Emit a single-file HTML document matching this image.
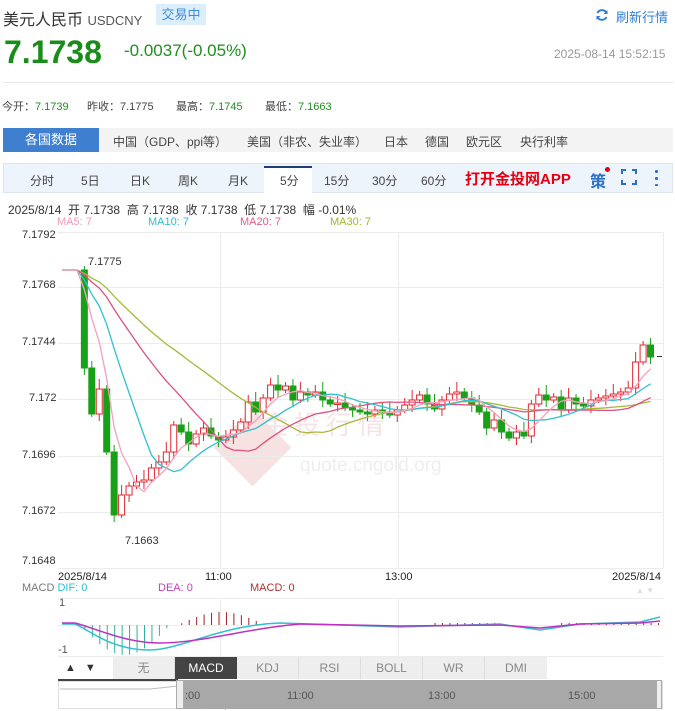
<!DOCTYPE html>
<html><head><meta charset="utf-8"><style>
*{margin:0;padding:0;box-sizing:border-box}
body{width:675px;height:711px;background:#fff;font-family:"Liberation Sans","Noto Sans CJK SC",sans-serif;color:#333;position:relative;overflow:hidden}
.a{position:absolute;white-space:nowrap}
.g{color:#1e8f1e}
</style></head><body>
<div class="a" style="left:3px;top:6px;font-size:16px;color:#333">美元人民币 <span style="font-size:13px;color:#555">USDCNY</span></div>
<div class="a" style="left:156px;top:4px;width:50px;height:21px;background:#ddeefb;color:#3d8fd6;font-size:13px;line-height:21px;text-align:center">交易中</div>
<svg class="a" style="left:595px;top:8px" width="14" height="14" viewBox="0 0 14 14"><path d="M11.5 5A5 5 0 0 0 2.5 5M2.5 9A5 5 0 0 0 11.5 9" stroke="#2d7fd3" stroke-width="2" fill="none"/><path d="M12.5 2v4h-4zM1.5 12V8h4z" fill="#2d7fd3"/></svg>
<div class="a" style="left:616px;top:7px;font-size:13px;color:#2d7fd3">刷新行情</div>
<div class="a g" style="left:4px;top:34px;font-size:32px;font-weight:bold;color:#1a8c1a">7.1738</div>
<div class="a g" style="left:124px;top:41px;font-size:17px">-0.0037(-0.05%)</div>
<div class="a" style="left:554px;top:47px;font-size:12px;color:#999">2025-08-14 15:52:15</div>
<div class="a" style="left:3px;top:82px;width:670px;height:1px;background:#e6e6e6"></div>
<div class="a" style="left:2px;top:98px;font-size:11px;color:#444">今开：<span class="g">7.1739</span></div>
<div class="a" style="left:87px;top:98px;font-size:11px;color:#444">昨收：7.1775</div>
<div class="a" style="left:176px;top:98px;font-size:11px;color:#444">最高：<span class="g">7.1745</span></div>
<div class="a" style="left:265px;top:98px;font-size:11px;color:#444">最低：<span class="g">7.1663</span></div>
<div class="a" style="left:3px;top:128px;width:670px;height:24px;background:#f3f3f3"></div>
<div class="a" style="left:3px;top:128px;width:96px;height:24px;background:#3f7fcf;color:#fff;font-size:13px;line-height:24px;text-align:center">各国数据</div>
<div class="a" style="left:113px;top:133px;font-size:12px;color:#444">中国（GDP、ppi等）</div>
<div class="a" style="left:247px;top:133px;font-size:12px;color:#444">美国（非农、失业率）</div>
<div class="a" style="left:384px;top:133px;font-size:12px;color:#444">日本</div>
<div class="a" style="left:425px;top:133px;font-size:12px;color:#444">德国</div>
<div class="a" style="left:466px;top:133px;font-size:12px;color:#444">欧元区</div>
<div class="a" style="left:520px;top:133px;font-size:12px;color:#444">央行利率</div>
<div class="a" style="left:3px;top:163px;width:670px;height:30px;background:#eef4fb;border:1px solid #dde6f0"></div>
<div class="a" style="left:264px;top:166px;width:48px;height:28px;background:#fff;border-top:2px solid #1f3f7a"></div>
<div class="a" style="top:172px;left:0;font-size:12px;color:#444;width:675px">
<span class="a" style="left:30px">分时</span><span class="a" style="left:81px">5日</span><span class="a" style="left:130px">日K</span><span class="a" style="left:178px">周K</span><span class="a" style="left:228px">月K</span><span class="a" style="left:280px">5分</span><span class="a" style="left:324px">15分</span><span class="a" style="left:372px">30分</span><span class="a" style="left:421px">60分</span></div>
<div class="a" style="left:465px;top:168px;font-size:15px;font-weight:bold;color:#e60012">打开金投网APP</div>
<div class="a" style="left:590px;top:168px;font-size:16px;color:#2d6fc7;font-weight:bold">策</div>
<div class="a" style="left:605px;top:167px;width:5px;height:5px;border-radius:50%;background:#e60012"></div>
<svg class="a" style="left:621px;top:169px" width="16" height="16"><path d="M1 5V1h4M11 1h4v4M15 11v4h-4M5 15H1v-4" stroke="#2d6fc7" stroke-width="2" fill="none"/></svg>
<div class="a" style="left:655px;top:168px;width:3px;height:18px;background:radial-gradient(circle,#2d6fc7 1.5px,transparent 1.6px) 0 0/3px 7px"></div>
<div class="a" style="left:8px;top:201px;font-size:12px;color:#333">2025/8/14 &nbsp;开 7.1738 &nbsp;高 7.1738 &nbsp;收 7.1738 &nbsp;低 7.1738 &nbsp;幅 -0.01%</div>
<div class="a" style="left:57px;top:216px;font-size:11px;color:#f29bb8">MA5: 7</div>
<div class="a" style="left:148px;top:216px;font-size:11px;color:#2bbfd2">MA10: 7</div>
<div class="a" style="left:240px;top:216px;font-size:11px;color:#e85a8a">MA20: 7</div>
<div class="a" style="left:330px;top:216px;font-size:11px;color:#a3b52a">MA30: 7</div>
<div class="a" style="left:262px;top:405px;font-size:26px;color:#f6e4e4;letter-spacing:6px">金投行情</div>
<div class="a" style="left:300px;top:455px;font-size:19px;color:#eee">quote.cngold.org</div>
<div class="a" style="left:225px;top:420px;width:55px;height:55px;background:#f7e2e2;transform:rotate(45deg)"></div>
<svg class="a" style="left:0;top:0" width="675" height="711" id="s"></svg>
<div class="a" style="left:22px;top:230px;font-size:11px;color:#333;line-height:1">7.1792</div>
<div class="a" style="left:22px;top:280px;font-size:11px;color:#333;line-height:1">7.1768</div>
<div class="a" style="left:22px;top:337px;font-size:11px;color:#333;line-height:1">7.1744</div>
<div class="a" style="left:29px;top:393px;font-size:11px;color:#333;line-height:1">7.172</div>
<div class="a" style="left:22px;top:450px;font-size:11px;color:#333;line-height:1">7.1696</div>
<div class="a" style="left:22px;top:506px;font-size:11px;color:#333;line-height:1">7.1672</div>
<div class="a" style="left:22px;top:556px;font-size:11px;color:#333;line-height:1">7.1648</div>
<div class="a" style="left:88px;top:256px;font-size:11px;color:#333">7.1775</div>
<div class="a" style="left:125px;top:535px;font-size:11px;color:#333">7.1663</div>
<div class="a" style="left:58px;top:571px;font-size:11px;color:#222">2025/8/14</div>
<div class="a" style="left:205px;top:571px;font-size:11px;color:#222">11:00</div>
<div class="a" style="left:385px;top:571px;font-size:11px;color:#222">13:00</div>
<div class="a" style="left:612px;top:571px;font-size:11px;color:#222">2025/8/14</div>
<div class="a" style="left:636px;top:586px;font-size:8px;color:#ddd">▲ ▼</div>
<div class="a" style="left:22px;top:582px;font-size:11px;color:#777">MACD <span style="color:#2bbfd2">DIF: 0</span></div>
<div class="a" style="left:158px;top:582px;font-size:11px;color:#c040c0">DEA: 0</div>
<div class="a" style="left:250px;top:582px;font-size:11px;color:#b03030">MACD: 0</div>
<div class="a" style="left:59px;top:597px;font-size:11px;color:#555">1</div>
<div class="a" style="left:58px;top:644px;font-size:11px;color:#555">-1</div>
<div class="a" style="left:58px;top:657px;width:46px;height:22px;background:#fff;font-size:11px;line-height:22px"><span style="margin-left:7px">▲</span><span style="margin-left:9px">▼</span></div>
<div class="a" style="left:113px;top:657px;width:435px;height:22px;display:flex;font-size:12px;line-height:22px;text-align:center;color:#888">
<div style="width:62px;background:#eee;border-right:1px solid #ddd">无</div><div style="width:62px;background:#444;color:#fff">MACD</div><div style="width:62px;background:#eee;border-right:1px solid #ddd">KDJ</div><div style="width:62px;background:#eee;border-right:1px solid #ddd">RSI</div><div style="width:62px;background:#eee;border-right:1px solid #ddd">BOLL</div><div style="width:62px;background:#eee;border-right:1px solid #ddd">WR</div><div style="width:62px;background:#eee">DMI</div></div>
<div class="a" style="left:58px;top:679px;width:120px;height:2px;background:#444"></div>
<div class="a" style="left:58px;top:681px;width:605px;height:28px;border:1px solid #ddd"></div>
<div class="a" style="left:178px;top:680px;width:483px;height:29px;background:#a8a8a8"></div>
<div class="a" style="left:176px;top:680px;width:8px;height:29px;background:#eee;border:1px solid #aaa"></div>
<div class="a" style="left:656px;top:680px;width:6px;height:29px;background:#eee;border:1px solid #aaa"></div>
<div class="a" style="left:185px;top:690px;font-size:11px;color:#555">:00</div>
<div class="a" style="left:287px;top:690px;font-size:11px;color:#555">11:00</div>
<div class="a" style="left:428px;top:690px;font-size:11px;color:#555">13:00</div>
<div class="a" style="left:568px;top:690px;font-size:11px;color:#555">15:00</div>
<script>
(function(){
var s=document.getElementById('s'),h='';
function L(x1,y1,x2,y2,c,w){h+='<line x1="'+x1+'" y1="'+y1+'" x2="'+x2+'" y2="'+y2+'" stroke="'+c+'" stroke-width="'+(w||1)+'"/>';}
[232,287,343,399,456,512,568].forEach(function(y){L(58,y+.5,663,y+.5,'#ececec')});
[220,398].forEach(function(x){L(x+.5,232,x+.5,568,'#ececec');L(x+.5,598,x+.5,656,'#ececec')});
L(663.5,232,663.5,568,'#ececec');L(58,598.5,663,598.5,'#ececec');L(58,656.5,663,656.5,'#ececec');
var c=[270,270,270,368,414,389,452,515,495,486,482,480,468,462,452,425,432,444,434,428,436,440,437,430,422,402,412,398,385,390,386,400,392,395,392,400,404,403,408,410,412,414,410,412,415,410,405,400,395,404,409,400,394,392,398,405,412,428,420,432,438,432,436,404,395,400,397,410,398,404,406,400,398,396,394,392,388,362,345,357];
var x0=62,dx=7.45,pad=[];for(var i=0;i<30;i++)pad.push(270);var all=pad.concat(c);
function ma(n){var p='';for(var i=0;i<c.length;i++){var k=i+30,t=0;for(var j=0;j<n;j++)t+=all[k-j];p+=(i?'L':'M')+(x0+i*dx).toFixed(1)+' '+(t/n).toFixed(1);}return p;}
for(var i=3;i<c.length;i++){var x=x0+i*dx,o=c[i-1],cl=c[i],up=cl<o,col=up?'#e0262f':'#18a018';var ty=Math.min(o,cl),bh=Math.max(Math.abs(o-cl),1.5);
L(x,ty-4-(i%3)*3,x,ty+bh+3+(i%2)*4,col);
h+='<rect x="'+(x-3)+'" y="'+ty+'" width="6" height="'+bh+'" fill="'+(up?'#fff':col)+'" stroke="'+col+'"/>';}
h+='<path d="'+ma(30)+'" stroke="#a8b83a" fill="none" stroke-width="1.3"/><path d="'+ma(20)+'" stroke="#e05080" fill="none" stroke-width="1.3"/><path d="'+ma(10)+'" stroke="#30c0d0" fill="none" stroke-width="1.3"/><path d="'+ma(5)+'" stroke="#f5a0bc" fill="none" stroke-width="1.3"/>';
h+='<line x1="657" y1="356.5" x2="662" y2="356.5" stroke="#333"/>';
L(58,625.5,663,625.5,'#eee');
for(var x=70;x<660;x+=7.45){var v=0;if(x>80&&x<170)v=-Math.sin((x-80)/90*Math.PI)*30;else if(x>178&&x<265)v=Math.sin((x-178)/87*Math.PI)*13;else if(x>430&&x<500)v=2;else if(x>560&&x<660)v=2;if(Math.abs(v)>1)L(x,625,x,625-v,v>0?'#a02020':'#30b0a0');}
h+='<path d="M62 624 L75 624 C90 630 110 650 150 650 C180 650 220 625 280 623 L400 627 L500 624 L540 630 L580 624 L640 622 L660 617" stroke="#30c0d0" fill="none" stroke-width="1.5"/>';
h+='<path d="M62 623 L75 623 C95 628 125 643 160 643 C200 643 250 628 300 624 L400 626 L500 625 L540 628 L580 624 L640 623 L660 621" stroke="#c030c0" fill="none" stroke-width="1.5"/>';
h+='<path d="M184 683 L195 690 L205 709 M225 709 L240 702 L270 700 L300 698 L330 697 L370 699 L420 699 L480 697 L520 699 L545 704 L570 704 L585 698 L630 697 L648 690 L657 692" stroke="#555" fill="none"/>';
h+='<path d="M60 689 L150 689 L178 686" stroke="#bbb" fill="none"/>';
s.innerHTML=h;
})();
</script>
</body></html>
